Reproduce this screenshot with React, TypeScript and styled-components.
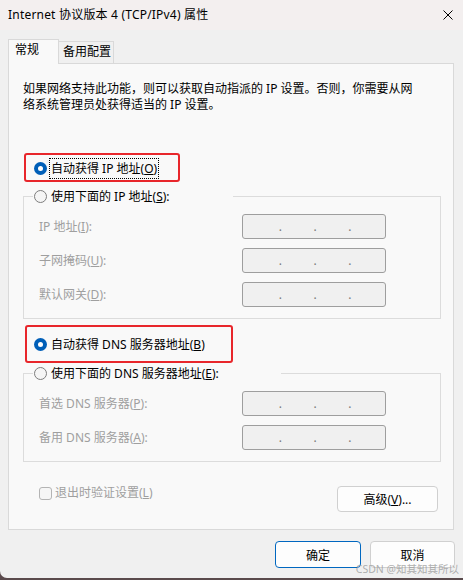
import React from "react";
import styled, { createGlobalStyle } from "styled-components";

const GlobalStyle = createGlobalStyle`
  html, body {
    margin: 0;
    padding: 0;
    background: #5a4a4c;
  }
  body {
    font-family: "Noto Sans", "Noto Sans CJK SC", sans-serif;
    font-size: 12px;
    color: #000;
  }
  * {
    box-sizing: border-box;
  }
`;

const Window = styled.div`
  position: relative;
  width: 463px;
  height: 578px;
  display: flex;
  flex-direction: column;
  background: #f0f0f0;
  border-bottom-left-radius: 7px;
  overflow: hidden;
`;

const TitleBar = styled.div`
  flex: none;
  height: 30px;
  display: flex;
  align-items: center;
  justify-content: space-between;
  padding: 0 10px 0 8px;
  background: #f3efef;
`;

const Title = styled.span`
  line-height: 16px;
  margin-top: -1px;
  letter-spacing: 0.2px;
`;

const Body = styled.div`
  flex: 1;
  display: flex;
  flex-direction: column;
  padding: 9px 9px 0 8px;
`;

const TabBar = styled.div`
  display: flex;
  align-items: flex-end;
  height: 24px;
`;

const Tab = styled.div<{ $active?: boolean; $width: number }>`
  position: relative;
  z-index: ${(p) => (p.$active ? 1 : 0)};
  width: ${(p) => p.$width}px;
  height: ${(p) => (p.$active ? 25 : 22)}px;
  margin-bottom: ${(p) => (p.$active ? -1 : 0)}px;
  padding: 2px 0 0 ${(p) => (p.$active ? 6 : 4)}px;
  line-height: 16px;
  border: 1px solid #d9d9d9;
  border-bottom: none;
  ${(p) => (p.$active ? "" : "border-left: none;")}
  background: ${(p) => (p.$active ? "#f9f9f9" : "#f0f0f0")};
`;

const Panel = styled.div`
  display: flex;
  flex-direction: column;
  padding: 17px 12px 17px 14px;
  background: #f9f9f9;
  border: 1px solid #d9d9d9;
`;

const Description = styled.p`
  margin: 0;
  max-width: 396px;
  line-height: 16px;
`;

const Highlight = styled.div<{ $w: number; $h: number; $top: number; $left: number; $pad: number }>`
  display: flex;
  align-items: center;
  width: ${(p) => p.$w}px;
  height: ${(p) => p.$h}px;
  margin: ${(p) => p.$top}px 0 0 ${(p) => p.$left}px;
  padding: ${(p) => p.$pad}px 0 0 ${(p) => 9 - p.$left}px;
  border: 2px solid #e8262b;
  border-radius: 3px;
`;

const RadioRow = styled.span`
  display: flex;
  align-items: center;
  gap: 2px;
`;

const RadioCircle = styled.span<{ $checked?: boolean }>`
  flex: none;
  width: 13px;
  height: 13px;
  border-radius: 50%;
  display: flex;
  align-items: center;
  justify-content: center;
  background: ${(p) => (p.$checked ? "#005fb8" : "#f5f5f5")};
  border: ${(p) => (p.$checked ? "none" : "1px solid #7d7d7d")};
  &::after {
    content: "";
    display: ${(p) => (p.$checked ? "block" : "none")};
    width: 5px;
    height: 5px;
    border-radius: 50%;
    background: #fff;
  }
`;

const RadioLabel = styled.span<{ $focus?: boolean }>`
  padding: 0 1px;
  line-height: 19px;
  border: 1px dotted ${(p) => (p.$focus ? "#000" : "transparent")};
  white-space: nowrap;
`;

const Group = styled.fieldset<{ $top: number }>`
  margin: ${(p) => p.$top}px 0 0 0;
  padding: 0 0 11px 9px;
  min-width: 0;
  border: 1px solid #dcdcdc;
`;

const Legend = styled.legend<{ $width: number }>`
  width: ${(p) => p.$width}px;
  padding: 0 0 0 1px;
`;

const Fields = styled.div`
  display: grid;
  grid-template-columns: 203px 144px;
  row-gap: 9px;
  margin-top: 7px;
  padding-left: 6px;
`;

const FieldLabel = styled.span`
  align-self: center;
  color: #9f9f9f;
  line-height: 16px;
  white-space: nowrap;
`;

const IpBox = styled.div`
  display: flex;
  height: 25px;
  padding: 0 2px 0 4px;
  background: #f0f0f0;
  border: 1px solid #9e9e9e;
  border-radius: 3px;
`;

const IpSegment = styled.span`
  flex: 1;
`;

const IpDot = styled.span`
  width: 3px;
  line-height: 23px;
  text-align: center;
  color: #7a7a7a;
`;

const BottomRow = styled.div`
  display: flex;
  justify-content: space-between;
  align-items: flex-start;
  margin-top: 24px;
  padding: 0 3px 0 16px;
`;

const CheckRow = styled.span`
  display: flex;
  align-items: center;
  gap: 3px;
  height: 14px;
  color: #9f9f9f;
`;

const CheckBox = styled.span`
  width: 13px;
  height: 13px;
  border: 1px solid #b4b4b4;
  border-radius: 3px;
  background: #f6f6f6;
`;

const CheckLabel = styled.span`
  line-height: 16px;
  white-space: nowrap;
`;

const PushButton = styled.button<{ $primary?: boolean; $width: number; $height: number }>`
  width: ${(p) => p.$width}px;
  height: ${(p) => p.$height}px;
  padding: 0;
  font: inherit;
  font-size: 12px;
  color: #000;
  background: #fdfdfd;
  border: 1px solid ${(p) => (p.$primary ? "#0067c0" : "#d0d0d0")};
  border-radius: 4px;
`;

const Footer = styled.div`
  display: flex;
  justify-content: flex-end;
  gap: 9px;
  padding-top: 11px;
  margin-right: -1px;
`;

const Watermark = styled.span`
  position: absolute;
  right: 4px;
  bottom: 2px;
  font-size: 10.5px;
  line-height: 14px;
  color: rgba(150, 150, 150, 0.75);
  white-space: nowrap;
`;

const Radio: React.FC<{ checked?: boolean; focus?: boolean; children: React.ReactNode }> = ({
  checked,
  focus,
  children,
}) => (
  <RadioRow>
    <RadioCircle $checked={checked} />
    <RadioLabel $focus={focus}>{children}</RadioLabel>
  </RadioRow>
);

const IpInput: React.FC = () => (
  <IpBox>
    <IpSegment />
    <IpDot>.</IpDot>
    <IpSegment />
    <IpDot>.</IpDot>
    <IpSegment />
    <IpDot>.</IpDot>
    <IpSegment />
  </IpBox>
);

const ipFields: [string, string][] = [
  ["IP 地址(", "I"],
  ["子网掩码(", "U"],
  ["默认网关(", "D"],
];

const dnsFields: [string, string][] = [
  ["首选 DNS 服务器(", "P"],
  ["备用 DNS 服务器(", "A"],
];

const FieldList: React.FC<{ fields: [string, string][] }> = ({ fields }) => (
  <Fields>
    {fields.map(([text, key]) => (
      <React.Fragment key={key}>
        <FieldLabel>
          {text}
          <u>{key}</u>):
        </FieldLabel>
        <IpInput />
      </React.Fragment>
    ))}
  </Fields>
);

export default function App() {
  return (
    <>
      <GlobalStyle />
      <Window>
        <TitleBar>
          <Title>Internet 协议版本 4 (TCP/IPv4) 属性</Title>
          <svg width="10" height="10" viewBox="0 0 10 10">
            <path d="M0.5 0.5L9.5 9.5M9.5 0.5L0.5 9.5" stroke="#000" strokeWidth="1" />
          </svg>
        </TitleBar>
        <Body>
          <TabBar>
            <Tab $active $width={51}>
              常规
            </Tab>
            <Tab $width={55}>备用配置</Tab>
          </TabBar>
          <Panel>
            <Description>
              如果网络支持此功能，则可以获取自动指派的 IP 设置。否则，你需要从网络系统管理员处获得适当的 IP 设置。
            </Description>

            <Highlight $w={156} $h={29} $top={40} $left={1} $pad={2}>
              <Radio checked focus>
                自动获得 IP 地址(<u>O</u>)
              </Radio>
            </Highlight>

            <Group $top={4}>
              <Legend $width={200}>
                <Radio>
                  使用下面的 IP 地址(<u>S</u>):
                </Radio>
              </Legend>
              <FieldList fields={ipFields} />
            </Group>

            <Highlight $w={208} $h={38} $top={6} $left={2} $pad={1}>
              <Radio checked>
                自动获得 DNS 服务器地址(<u>B</u>)
              </Radio>
            </Highlight>

            <Group $top={0}>
              <Legend $width={248}>
                <Radio>
                  使用下面的 DNS 服务器地址(<u>E</u>):
                </Radio>
              </Legend>
              <FieldList fields={dnsFields} />
            </Group>

            <BottomRow>
              <CheckRow>
                <CheckBox />
                <CheckLabel>
                  退出时验证设置(<u>L</u>)
                </CheckLabel>
              </CheckRow>
              <PushButton $width={101} $height={26}>
                高级(<u>V</u>)...
              </PushButton>
            </BottomRow>
          </Panel>
          <Footer>
            <PushButton $primary $width={86} $height={27}>
              确定
            </PushButton>
            <PushButton $width={85} $height={27}>
              取消
            </PushButton>
          </Footer>
        </Body>
        <Watermark>CSDN @知其知其所以</Watermark>
      </Window>
    </>
  );
}
